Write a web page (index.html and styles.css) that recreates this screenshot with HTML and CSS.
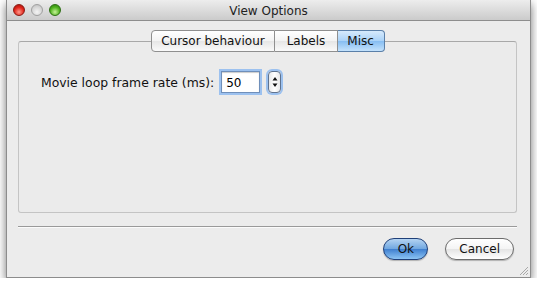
FILE: index.html
```html
<!DOCTYPE html>
<html lang="en">
	<head>
		<meta charset="UTF-8"/>
		<meta name="viewport" content="width=device-width, initial-scale=1.0"/>
		<title>View Options</title>
		<link rel="stylesheet" href="styles.css">
	</head>
	<body>
	  <div class="window">
		<div class="titlebar">
		  <div class="lights">
			<span class="light red"></span>
			<span class="light gray"></span>
			<span class="light green"></span>
		  </div>
		  <div class="title">View Options</div>
		</div>
		<div class="content">
		  <div class="tabs">
			<span class="tab">Cursor behaviour</span>
			<span class="tab">Labels</span>
			<span class="tab active">Misc</span>
		  </div>
		  <div class="panel">
			<div class="row">
			  <label class="label">Movie loop frame rate (ms):</label>
			  <input class="field" type="text" value="50">
			  <span class="stepper">
				<svg width="8" height="18" viewBox="0 0 8 18">
				  <path d="M4 4 L6.5 7.5 L1.5 7.5 Z" fill="#111"/>
				  <path d="M4 14 L6.5 10.5 L1.5 10.5 Z" fill="#111"/>
				</svg>
			  </span>
			</div>
		  </div>
		  <div class="separator"></div>
		  <div class="buttons">
			<button class="btn default">Ok</button>
			<button class="btn">Cancel</button>
		  </div>
		</div>
		<svg class="grip" width="10" height="10" viewBox="0 0 10 10">
		  <path d="M9 1 L1 9 M9 4 L4 9 M9 7 L7 9" stroke="#a8a8a8" stroke-width="1"/>
		</svg>
	  </div>
	</body>
</html>
```

FILE: styles.css
```css
* {
  box-sizing: border-box;
  outline: none;
}
body {
  margin: 0;
  background: #fff;
  font-family: "DejaVu Sans", "Lucida Grande", sans-serif;
  font-size: 12px;
  color: #111;
}
.window {
  position: relative;
  margin-left: 6px;
  width: 525px;
  height: 278px;
  background: #ececec;
  border: 1px solid #8c8c8c;
  border-top: none;
  box-shadow: 0 4px 9px rgba(0, 0, 0, 0.55);
}
.titlebar {
  position: relative;
  height: 21px;
  background: linear-gradient(#ededed, #cbcbcb);
  border-bottom: 1px solid #8e8e8e;
  display: flex;
  align-items: center;
  justify-content: center;
}
.lights {
  position: absolute;
  left: 6px;
  top: 4px;
  display: flex;
  gap: 6px;
}
.light {
  width: 12px;
  height: 12px;
  border-radius: 50%;
}
.red {
  background: radial-gradient(circle at 50% 70%, #ff9a8c, #e0241a 55%, #9a1008);
  border: 1px solid #8a1a12;
}
.gray {
  background: radial-gradient(circle at 50% 70%, #f4f4f4, #d4d4d4 60%, #b8b8b8);
  border: 1px solid #a0a0a0;
}
.green {
  background: radial-gradient(circle at 50% 70%, #c8f39a, #4fb21e 55%, #2a7a0c);
  border: 1px solid #2c6e12;
}
.title {
  font-size: 12px;
  color: #222;
  padding-top: 1px;
}
.content {
  padding: 9px 13px 0 11px;
}
.tabs {
  position: relative;
  z-index: 1;
  display: flex;
  justify-content: center;
  margin-bottom: -11px;
  margin-left: 1px;
}
.tab {
  height: 22px;
  line-height: 20px;
  padding: 0 12px 0 12px;
  background: linear-gradient(#ffffff, #f3f3f3 50%, #e6e6e6 51%, #fafafa);
  border: 1px solid #8f8f8f;
  border-left: none;
  color: #111;
}
.tab:first-child {
  border-left: 1px solid #8f8f8f;
  border-radius: 4px 0 0 4px;
  padding: 0 9px 0 9px;
}
.tab:last-child {
  border-radius: 0 4px 4px 0;
}
.tab.active {
  background: linear-gradient(#d6eafc, #a9d2f8 50%, #86bdf2 51%, #c4e2fc);
  border-color: #5a7fa8;
  padding: 0 10px 0 9px;
}
.panel {
  height: 172px;
  border: 1px solid #c4c4c4;
  border-top-color: #a8a8a8;
  border-radius: 3px;
  background: #ebebeb;
  padding: 29px 0 0 22px;
}
.row {
  display: flex;
  align-items: center;
}
.label {
  font-size: 12.4px;
  margin-right: 7px;
}
.field {
  width: 39px;
  height: 22px;
  padding: 1px 4px 0;
  font-family: "DejaVu Sans", sans-serif;
  font-size: 12px;
  color: #000;
  border: 1px solid #6f8fba;
  box-shadow: 0 0 0 2px #9cc1ef, inset 0 1px 1px rgba(0, 0, 0, 0.2);
  background: #fff;
}
.stepper {
  margin-left: 8px;
  width: 13px;
  height: 22px;
  border: 1px solid #5f7390;
  border-radius: 4px;
  box-shadow: 0 0 0 2px #9cc1ef;
  background: linear-gradient(90deg, #e8e8e8, #fff, #e8e8e8);
  display: flex;
  align-items: center;
  justify-content: center;
}
.separator {
  margin-top: 13px;
  height: 2px;
  border-top: 1px solid #9a9a9a;
  border-bottom: 1px solid #fbfbfb;
}
.buttons {
  display: flex;
  justify-content: flex-end;
  gap: 17px;
  margin-top: 10px;
  padding-right: 3px;
}
.btn {
  height: 22px;
  padding: 0 13px;
  font-family: "DejaVu Sans", sans-serif;
  font-size: 12px;
  color: #111;
  border: 1px solid #6c6c6c;
  border-radius: 11px;
  background: linear-gradient(#ffffff, #f4f4f4 50%, #e4e4e4 51%, #ffffff);
  box-shadow: 0 1px 1px rgba(0, 0, 0, 0.25);
}
.btn.default {
  min-width: 45px;
  border-color: #1f3f78;
  background: linear-gradient(#b4d3f2, #6fa6e0 50%, #3f7fcf 51%, #8cc4f4);
}
.grip {
  position: absolute;
  right: 1px;
  bottom: 1px;
}
```
